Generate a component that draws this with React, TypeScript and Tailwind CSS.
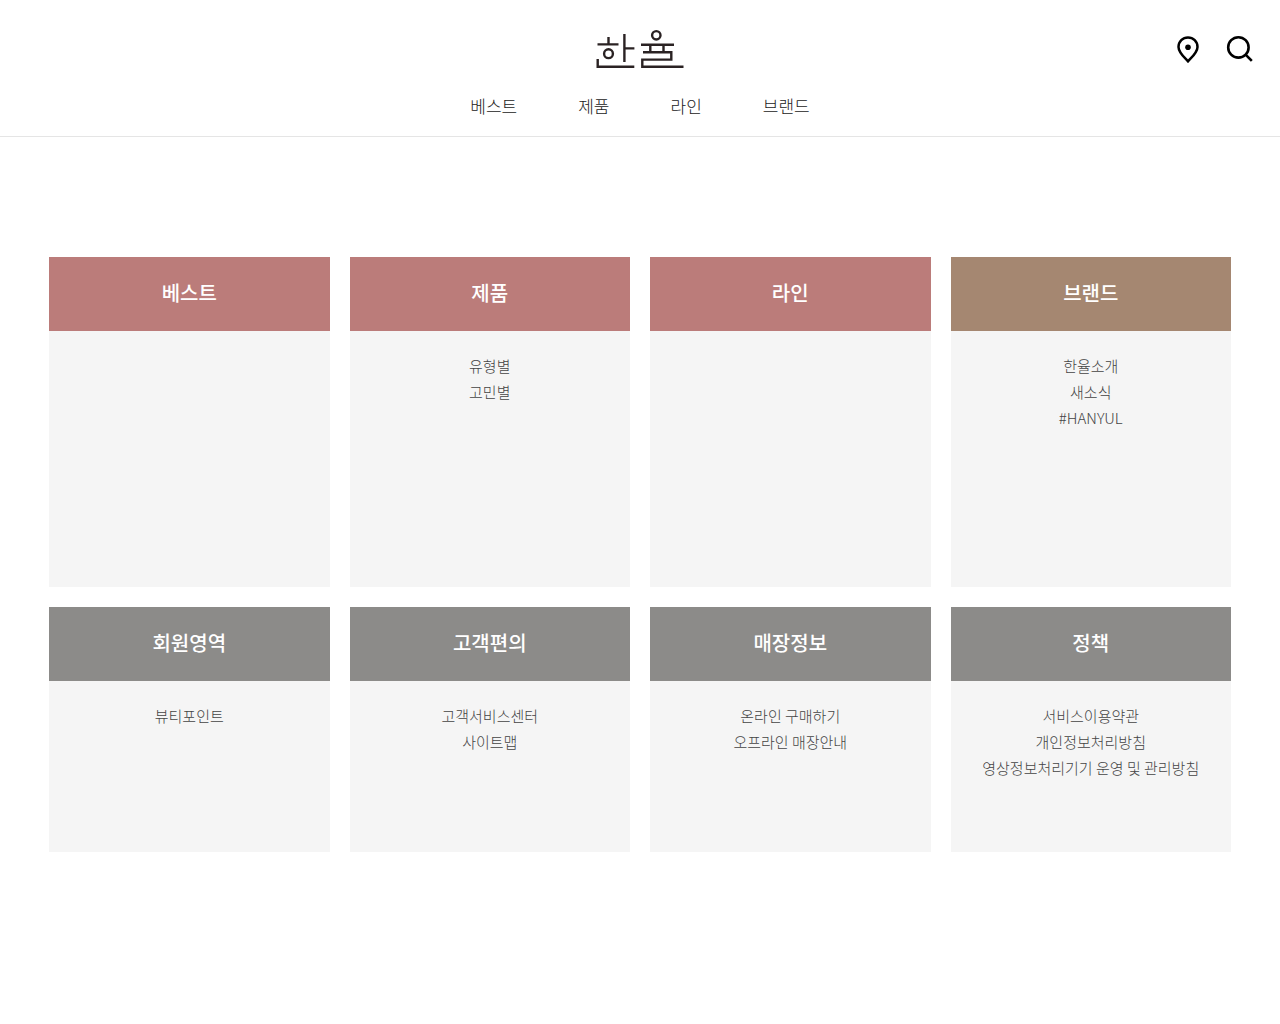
// Site map page with the brand header and category cards

import React from 'react';

interface SitemapLink {
  label: string;
  href: string;
}

interface SitemapSection {
  title: string;
  color: string;
  links: SitemapLink[];
}

const navItems: SitemapLink[] = [
  { label: '베스트', href: '#best' },
  { label: '제품', href: '#products' },
  { label: '라인', href: '#line' },
  { label: '브랜드', href: '#brand' },
];

const brandSections: SitemapSection[] = [
  { title: '베스트', color: 'bg-[#bb7c7a]', links: [] },
  {
    title: '제품',
    color: 'bg-[#bb7c7a]',
    links: [
      { label: '유형별', href: '#type' },
      { label: '고민별', href: '#concern' },
    ],
  },
  { title: '라인', color: 'bg-[#bb7c7a]', links: [] },
  {
    title: '브랜드',
    color: 'bg-[#a58771]',
    links: [
      { label: '한율소개', href: '#about' },
      { label: '새소식', href: '#news' },
      { label: '#HANYUL', href: '#hanyul' },
    ],
  },
];

const serviceSections: SitemapSection[] = [
  {
    title: '회원영역',
    color: 'bg-[#8c8b89]',
    links: [{ label: '뷰티포인트', href: '#beautypoint' }],
  },
  {
    title: '고객편의',
    color: 'bg-[#8c8b89]',
    links: [
      { label: '고객서비스센터', href: '#center' },
      { label: '사이트맵', href: '#sitemap' },
    ],
  },
  {
    title: '매장정보',
    color: 'bg-[#8c8b89]',
    links: [
      { label: '온라인 구매하기', href: '#online' },
      { label: '오프라인 매장안내', href: '#offline' },
    ],
  },
  {
    title: '정책',
    color: 'bg-[#8c8b89]',
    links: [
      { label: '서비스이용약관', href: '#terms' },
      { label: '개인정보처리방침', href: '#privacy' },
      { label: '영상정보처리기기 운영 및 관리방침', href: '#cctv' },
    ],
  },
];

const Logo: React.FC = () => (
  <svg width="88" height="40" viewBox="0 0 88 40" fill="none" stroke="#2a2223" strokeWidth="2.4" aria-hidden="true">
    {/* Left syllable */}
    <path d="M12.5 8v7M1.5 15.4h21M28.4 5v28M28.4 19.4h10" />
    <circle cx="12.500" cy="24.700" r="4.400" />
    <path d="M1.700 30v7.800h36.600" />
    {/* Right syllable */}
    <circle cx="60.300" cy="6.300" r="4.200" />
    <path d="M45 15.800h33M54.300 16v7M67.500 16v7" />
    <path d="M47 23.300h28.300v7.300h-29v7.200h41.200" />
  </svg>
);

const Header: React.FC = () => (
  <header className="border-b border-[#e5e5e5] pt-[29px] pb-[17px]">
    <div className="grid grid-cols-3 items-center px-[26px]">
      <a href="#home" aria-label="한율" className="col-start-2 justify-self-center">
        <Logo />
      </a>
      <div className="flex items-center gap-6 justify-self-end">
        <a href="#stores" aria-label="매장찾기">
          <svg width="28" height="28" viewBox="0 0 28 28" fill="none" aria-hidden="true">
            <path
              d="M14 26.3c4-4.3 9.5-8.9 9.5-14.4a9.5 9.5 0 1 0-19 0c0 5.5 5.500 10.100 9.500 14.400z"
              stroke="#000"
              strokeWidth="2.5"
            />
            <circle cx="14" cy="12.3" r="2.8" fill="#000" />
          </svg>
        </a>
        <button type="button" aria-label="검색">
          <svg width="28" height="28" viewBox="0 0 28 28" fill="none" stroke="#000" strokeWidth="2.6" aria-hidden="true">
            <circle cx="12.4" cy="12.4" r="10.2" />
            <path d="M19.6 19.600l6.200 6.200" />
          </svg>
        </button>
      </div>
    </div>
    <nav className="mt-[23px] flex justify-center gap-[61px]">
      {navItems.map((item) => (
        <a key={item.label} href={item.href} className="text-[17px] leading-[27px] font-light text-[#222]">
          {item.label}
        </a>
      ))}
    </nav>
  </header>
);

const SectionCard: React.FC<{ section: SitemapSection; bodyClass: string }> = ({ section, bodyClass }) => (
  <section className="flex flex-col">
    <h2 className={`pt-[21px] pb-[23px] text-center text-xl leading-[30px] font-medium text-white ${section.color}`}>
      {section.title}
    </h2>
    <ul className={`flex-1 bg-[#f5f5f5] pt-[22px] text-center ${bodyClass}`}>
      {section.links.map((link) => (
        <li key={link.label} className="text-[15px] leading-[26px] font-light text-[#444]">
          <a href={link.href} className="hover:underline">
            {link.label}
          </a>
        </li>
      ))}
    </ul>
  </section>
);

export default function App() {
  return (
    <div className="min-h-screen bg-white font-['Noto_Sans_CJK_KR',sans-serif]">
      <Header />
      <main className="space-y-5 px-[49px] py-[120px]">
        <div className="grid grid-cols-4 gap-5">
          {brandSections.map((section) => (
            <SectionCard key={section.title} section={section} bodyClass="min-h-64" />
          ))}
        </div>
        <div className="grid grid-cols-4 gap-5">
          {serviceSections.map((section) => (
            <SectionCard key={section.title} section={section} bodyClass="min-h-[171px]" />
          ))}
        </div>
      </main>
    </div>
  );
}
